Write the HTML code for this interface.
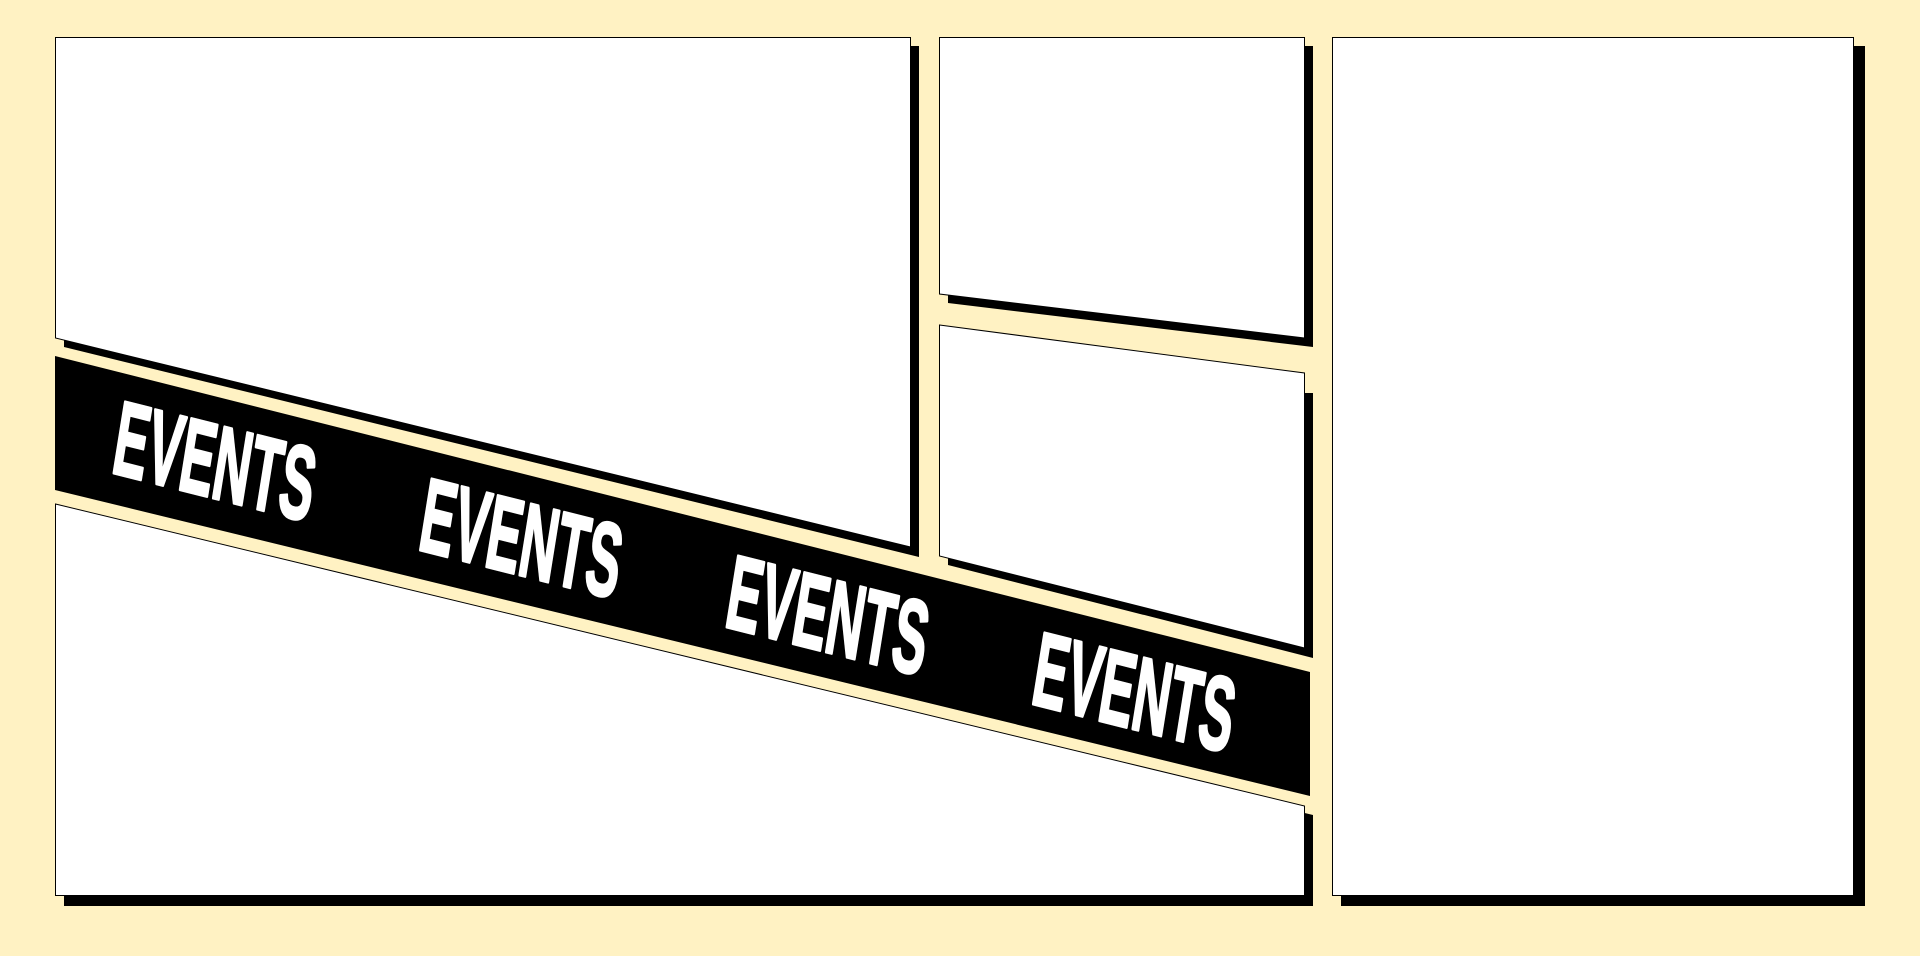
<!DOCTYPE html>
<html><head><meta charset="utf-8"><style>
html,body{margin:0;padding:0;background:#fff2c3;width:1920px;height:956px;overflow:hidden}
svg{display:block}
</style></head><body>
<svg width="1920" height="956" viewBox="0 0 1920 956" xmlns="http://www.w3.org/2000/svg">
<rect width="1920" height="956" fill="#fff2c3"/>
<g fill="#000">
<polygon points="64,46 919,46 919,557 64,347"/>
<polygon points="948,46 1313,46 1313,347 948,303"/>
<polygon points="948,393 1313,393 1313,658 948,565"/>
<polygon points="64,513 1313,815 1313,906 64,906"/>
<polygon points="1341,46 1865,46 1865,906 1341,906"/>
</g>
<polygon points="55,356 1310,672 1310,796 55,490" fill="#000"/>
<g fill="#fff" stroke="#000" stroke-width="1">
<polygon points="55.5,37.5 910.5,37.5 910.5,547 55.5,338"/>
<polygon points="939.5,37.5 1304.5,37.5 1304.5,338 939.5,294"/>
<polygon points="939.5,325 1304.5,373 1304.5,648 939.5,556"/>
<polygon points="55.5,504 1304.5,806 1304.5,895.5 55.5,895.5"/>
<rect x="1332.5" y="37.5" width="521" height="858"/>
</g>
<g transform="translate(110,472) rotate(14.1)" fill="#fff" stroke="#fff" stroke-width="3" stroke-linejoin="round" font-family="'Liberation Sans Narrow','Liberation Sans',sans-serif" font-weight="bold" font-size="104">
<g transform="skewX(5)">
<text x="0" y="0" textLength="205" lengthAdjust="spacingAndGlyphs">EVENTS</text>
<text x="316" y="0" textLength="205" lengthAdjust="spacingAndGlyphs">EVENTS</text>
<text x="632" y="0" textLength="205" lengthAdjust="spacingAndGlyphs">EVENTS</text>
<text x="948" y="0" textLength="205" lengthAdjust="spacingAndGlyphs">EVENTS</text>
</g>
</g>
</svg>
</body></html>
